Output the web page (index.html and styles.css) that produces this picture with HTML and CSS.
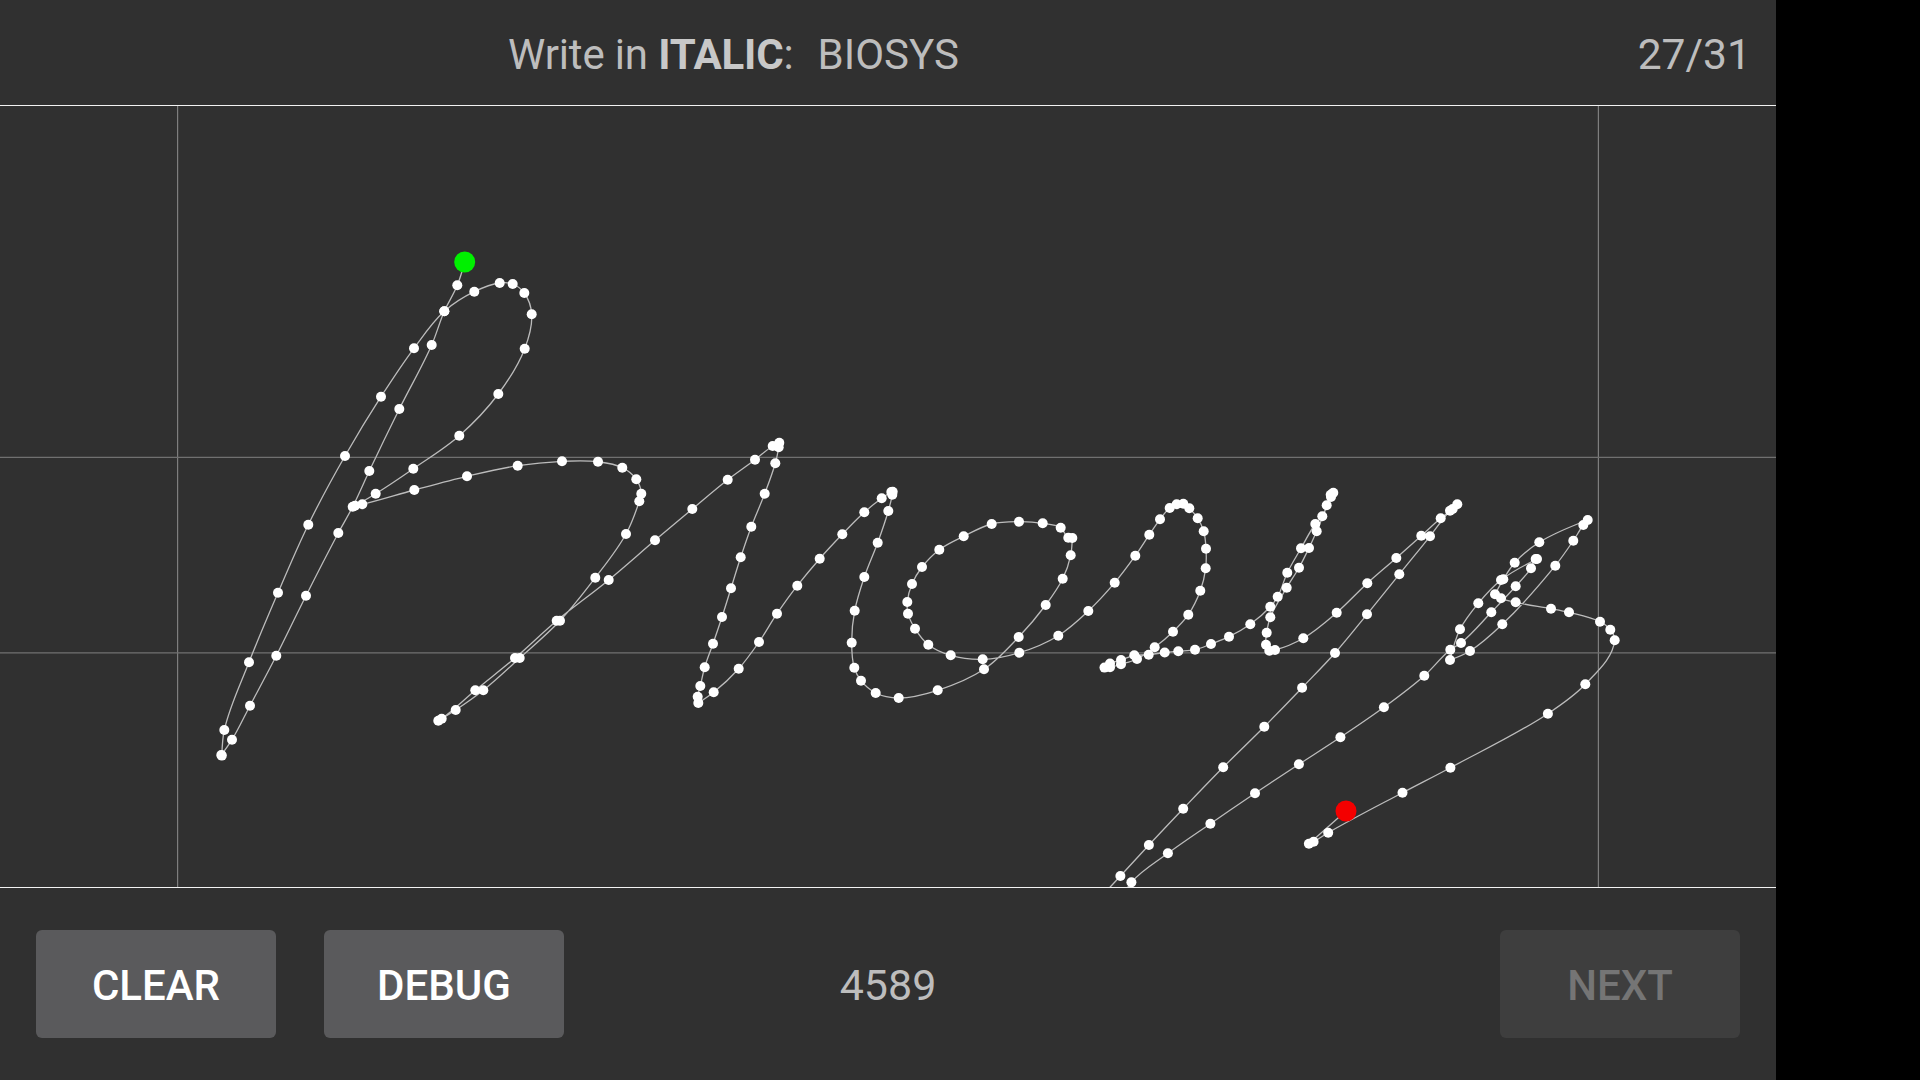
FILE: index.html
```html
<!DOCTYPE html>
<html lang="en">
<head>
<meta charset="utf-8">
<title>Write in ITALIC</title>
<link rel="stylesheet" href="styles.css">
</head>
<body>
<main class="app">
  <header class="header">
    <div class="prompt">
      <span class="instruction">Write in <b class="style-name">ITALIC</b>:</span>
      <span class="word">BIOSYS</span>
    </div>
    <span class="counter">27/31</span>
  </header>
  <section class="canvas">
    <svg id="pad" class="pad" viewBox="0 106 1776 781" xmlns="http://www.w3.org/2000/svg">
      <line class="guide-v" x1="177.6" y1="106" x2="177.6" y2="887"></line>
      <line class="guide-v" x1="1598.4" y1="106" x2="1598.4" y2="887"></line>
      <line class="guide-h" x1="0" y1="457.3" x2="1776" y2="457.3"></line>
      <line class="guide-h" x1="0" y1="652.9" x2="1776" y2="652.9"></line>
    </svg>
  </section>
  <footer class="footer">
    <div class="actions">
      <button class="btn" type="button">CLEAR</button>
      <button class="btn" type="button">DEBUG</button>
    </div>
    <span class="count">4589</span>
    <div class="actions actions-end">
      <button class="btn btn-disabled" type="button" disabled>NEXT</button>
    </div>
  </footer>
</main>
<script src="app.js"></script>
</body>
</html>
```
FILE: styles.css
```css
* { box-sizing: border-box; }
html, body { margin: 0; height: 100%; }
body {
  background: #000;
  font-family: Roboto, "Liberation Sans", sans-serif;
  overflow: hidden;
}
.app {
  width: 1776px;
  height: 1080px;
  background: #303030;
  display: flex;
  flex-direction: column;
}
.header {
  height: 105px;
  display: flex;
  align-items: center;
  justify-content: space-between;
  padding: 3px 25px 0 508px;
  font-size: 42px;
  color: #bdbdbd;
}
.prompt { display: flex; gap: 24px; }
.instruction { letter-spacing: -0.15px; }
.style-name { font-weight: 700; color: #c8c8c8; }
.counter { font-size: 42.6px; }
.canvas {
  height: 783px;
  border-top: 1px solid #f2f2f2;
  border-bottom: 1px solid #f2f2f2;
}
.pad { display: block; width: 1776px; height: 781px; overflow: hidden; }
.guide-v { stroke: #7e7e7e; stroke-width: 1.2; }
.guide-h { stroke: #707070; stroke-width: 1.3; }
.stroke-line { fill: none; stroke: #bcbcbc; stroke-width: 1.3; }
.dot { fill: #fff; }
.dot-start { fill: #00f000; }
.dot-end { fill: #f40000; }
.footer {
  height: 192px;
  display: grid;
  grid-template-columns: 1fr auto 1fr;
  align-items: start;
  padding: 42px 36px 0;
}
.actions { display: flex; gap: 48px; }
.actions-end { justify-content: flex-end; }
.btn {
  width: 240px;
  height: 108px;
  padding: 2px 0 0;
  border: 0;
  border-radius: 6px;
  background: #5a5a5c;
  color: #fff;
  font: 500 42px Roboto, "Liberation Sans", sans-serif;
}
.btn-disabled { background: #3e3e3e; color: #757575; }
.count {
  height: 108px;
  padding-top: 2px;
  display: flex;
  align-items: center;
  font-size: 43px;
  color: #bdbdbd;
}
```
FILE: app.js
```js
var pts = [
[464.7,262],[457.3,285.3],[444.3,311.3],[431.7,345],[399.3,409],[369.3,471],[352.7,506.7],[338.3,533],[306,595.7],[276.3,655.7],[250,705.7],[232,739.7],[221.3,755],[221.8,755.6],[224.3,730],[249,662.3],[278,592.7],[308.3,524.7],[345,456],[381,396.7],[414,348.3],[444.3,311.3],[474.3,291.7],[499.7,283],[512.7,284],[524.3,293],[531.7,314.3],[524.7,348.7],[498.3,394],[459.3,435.7],[413.3,468.7],[375.7,493.7],[355,505.7],[362.3,504.3],[414.3,490],[467,476.3],[517.7,465.7],[562,461.3],[598,461.7],[622.3,467.7],[636.3,479.3],[641.3,493.7],[639.3,501.3],[626,534],[595.3,577.7],[560,620.7],[519.7,658],[483.3,690.3],[455.7,710],[438.3,720.7],[441.7,718.7],[475.3,690.3],[515,658],[556.7,620.7],[608.7,580],[655,540.3],[692.3,509],[727.7,479.7],[755,459.7],[772.7,446],[779.3,442.7],[778.7,447.3],[775.3,463.3],[764.7,493.7],[751.3,526.7],[740.7,557.3],[731,588.3],[722,617],[713,643.7],[704.7,667.3],[700.3,686],[697.7,696.7],[698.3,703],[713.7,692.3],[738.7,668.7],[759,642],[777,613.7],[797.3,585.7],[819.7,558.7],[842.3,534.3],[864.3,512.3],[881.7,498.3],[891.3,492],[892.7,491.7],[892.3,494.7],[888.3,511],[877.7,542.7],[864.3,577],[854.7,610.7],[851.7,642.7],[854.3,667.7],[861,680.7],[875.7,693],[898.7,698],[937.7,690.3],[984,669.3],[1018.7,637],[1045.7,605],[1062.7,578.7],[1070.7,555.3],[1072.3,538],[1068.3,537.7],[1060.7,527.7],[1042.7,523.3],[1019,521.7],[991.7,524],[963.7,536.3],[939.3,549.7],[922,567],[912,584],[907.3,602],[908,613.7],[915,628.7],[928.3,644.7],[950.7,655.3],[982.7,659.3],[1019.3,652.7],[1058.3,635.7],[1088.3,611],[1114.7,582.7],[1135.3,555.7],[1149.3,534.7],[1160,519.3],[1169.7,508],[1176.7,504.3],[1183.3,503.7],[1189.3,508.3],[1197.7,518.3],[1203.7,531.3],[1206,548.7],[1205.7,568.3],[1200.3,590.7],[1188.3,614.7],[1173,631.7],[1154.7,647.3],[1137,659],[1121,664.3],[1110,667.3],[1104.5,667.6],[1110,663.5],[1121,660],[1134.3,655.3],[1148.7,654.7],[1164.7,652.5],[1178.3,651.3],[1195,649.7],[1211,644],[1229,636.7],[1250.3,624.3],[1270.3,606.7],[1277.7,596.7],[1287.3,572.7],[1301,548.3],[1315.3,524],[1322.3,516.3],[1326.7,505.3],[1330.7,494.7],[1333.3,492.7],[1331,497],[1316.7,531.3],[1309,548],[1299,567.7],[1286.7,587.7],[1270.3,617.3],[1266.7,632.7],[1266,644.7],[1269.3,650.7],[1275,650],[1303.3,638.3],[1336.7,612.7],[1367.3,583.3],[1396.3,558],[1421.3,535.7],[1440.7,518.3],[1452.7,509],[1457.3,504.3],[1450,510.7],[1430,536.3],[1399.3,574.3],[1367,614.3],[1335,653],[1302.1,687.7],[1264.3,726.7],[1223.2,767.3],[1183.2,808.7],[1148.9,845],[1120.4,876],[1100,898],[1118,906],[1131.4,882.3],[1167.9,853.3],[1210.4,823.7],[1255,793.3],[1298.9,764.3],[1340.4,737.3],[1383.9,707.3],[1424.3,675.7],[1450.3,649.7],[1461,643],[1491.3,612.3],[1515.7,586.3],[1531,568.3],[1535.7,559],[1537,559],[1501,580],[1478.3,603.3],[1460,629.3],[1450,660],[1470,651],[1502.3,624.3],[1555.3,565.7],[1573.3,540.7],[1583.3,525],[1587.7,520],[1539.3,542.3],[1514.7,562.7],[1503.3,579.3],[1495,594.3],[1501,598.3],[1515.7,602.3],[1551,608.7],[1569,612.3],[1600,621.7],[1610.3,629.7],[1614.7,640.3],[1585.3,684.3],[1547.9,713.7],[1450.4,767.7],[1402.5,792.7],[1328.2,832.7],[1313.6,841.7],[1308.9,843.7],[1346,811]
];

var NS = "http://www.w3.org/2000/svg";
var pad = document.getElementById("pad");

function make(tag, attrs) {
  var el = document.createElementNS(NS, tag);
  for (var k in attrs) el.setAttribute(k, attrs[k]);
  return el;
}

function unit(a, b) {
  var dx = b[0] - a[0], dy = b[1] - a[1];
  var len = Math.hypot(dx, dy) || 1;
  return [dx / len, dy / len, len];
}

// tangent at point i; null marks a sharp corner where the pen reversed
function tangent(i) {
  if (i === 0 || i === pts.length - 1) return null;
  var u = unit(pts[i - 1], pts[i]);
  var v = unit(pts[i], pts[i + 1]);
  if (u[0] * v[0] + u[1] * v[1] < 0.35) return null;
  return unit([0, 0], [u[0] + v[0], u[1] + v[1]]);
}

var d = "M" + pts[0][0] + " " + pts[0][1];
for (var i = 0; i < pts.length - 1; i++) {
  var a = pts[i], b = pts[i + 1];
  var len = Math.hypot(b[0] - a[0], b[1] - a[1]) / 3;
  var ta = tangent(i), tb = tangent(i + 1);
  var c1 = ta ? [a[0] + ta[0] * len, a[1] + ta[1] * len] : a;
  var c2 = tb ? [b[0] - tb[0] * len, b[1] - tb[1] * len] : b;
  d += "C" + c1[0].toFixed(1) + " " + c1[1].toFixed(1) + " " +
       c2[0].toFixed(1) + " " + c2[1].toFixed(1) + " " + b[0] + " " + b[1];
}
pad.appendChild(make("path", { d: d, "class": "stroke-line" }));

for (var j = 1; j < pts.length - 1; j++) {
  pad.appendChild(make("circle", { cx: pts[j][0], cy: pts[j][1], r: 5, "class": "dot" }));
}
pad.appendChild(make("circle", { cx: pts[0][0], cy: pts[0][1], r: 10.5, "class": "dot-start" }));
pad.appendChild(make("circle", { cx: pts[pts.length - 1][0], cy: pts[pts.length - 1][1], r: 10.5, "class": "dot-end" }));
```
